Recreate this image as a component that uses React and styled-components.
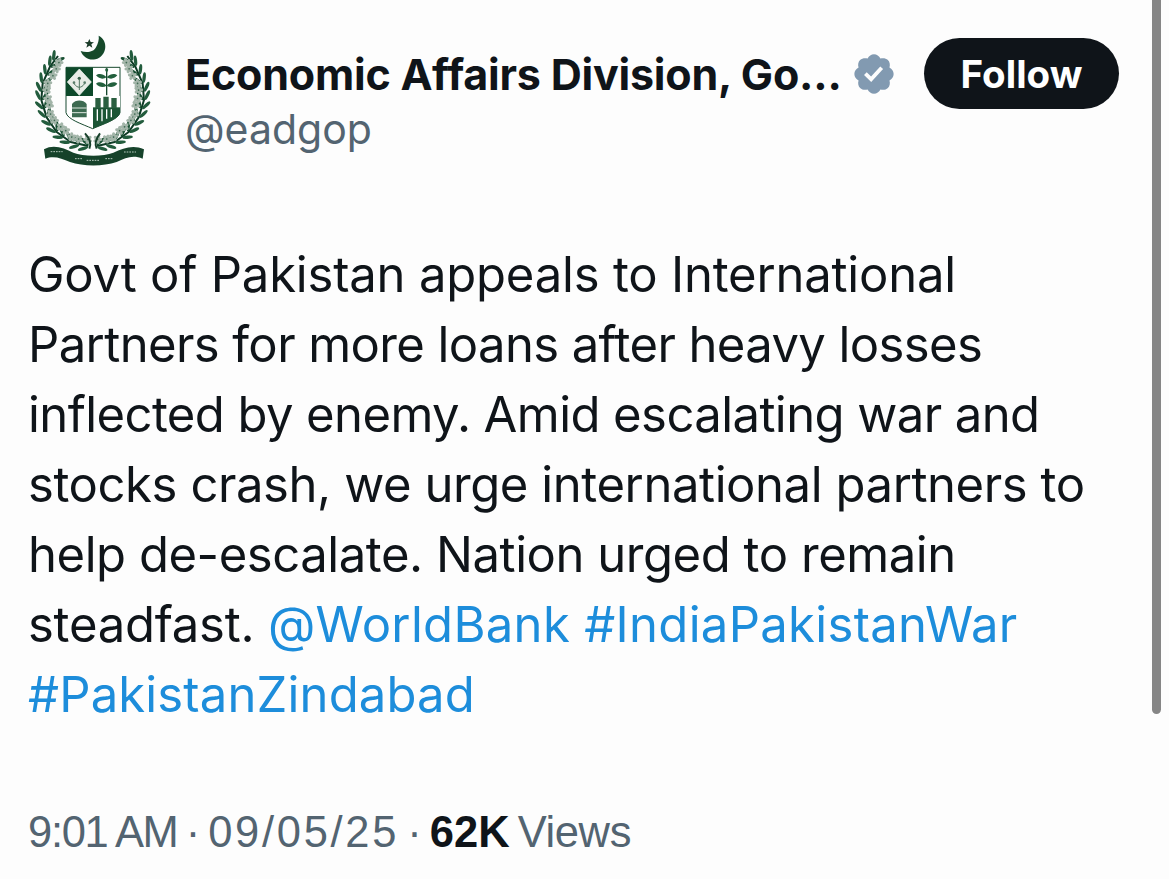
import React from "react";
import styled, { createGlobalStyle } from "styled-components";

const Global = createGlobalStyle`
  html, body { margin: 0; padding: 0; background: #fdfdfd; }
  * { box-sizing: border-box; }
`;

const Page = styled.div`
  position: relative;
  width: 1169px;
  height: 879px;
  overflow: hidden;
  background: #fdfdfd;
  font-family: Inter, "Liberation Sans", sans-serif;
  color: #0f1419;
`;

const Scrollbar = styled.div`
  position: absolute;
  top: 0;
  left: 1152px;
  width: 9px;
  height: 714px;
  background: #868686;
  border-radius: 0 0 5px 5px;
`;

const Header = styled.header`
  display: flex;
  align-items: flex-start;
  height: 160px;
  padding: 20px 0 0 20px;
`;

const Avatar = styled.svg`
  width: 150px;
  height: 160px;
  flex: none;
`;

const Identity = styled.div`
  display: flex;
  flex-direction: column;
  width: 739px;
  margin-left: 15px;
  padding-top: 25px;
`;

const NameRow = styled.div`
  display: flex;
  align-items: center;
  height: 58px;
`;

const Name = styled.span`
  font-size: 43px;
  font-weight: 700;
  letter-spacing: -0.2px;
  white-space: nowrap;
`;

const Badge = styled.svg`
  width: 46px;
  height: 46px;
  margin-left: 9px;
  fill: #829ab1;
  flex: none;
`;

const Handle = styled.span`
  font-size: 41px;
  line-height: 52px;
  color: #536471;
`;

const FollowButton = styled.button`
  width: 195px;
  height: 71px;
  margin-top: 18px;
  border: 0;
  border-radius: 36px;
  background: #0f1419;
  color: #fff;
  font: 700 38.5px Inter, "Liberation Sans", sans-serif;
`;

const Body = styled.div`
  padding: 80px 0 0 28px;
  font-size: 49px;
  line-height: 70px;
`;

const Line = styled.div`
  white-space: nowrap;
  letter-spacing: ${(p) => p.$track}px;
`;

const Link = styled.span`
  color: #1d8ddb;
  letter-spacing: ${(p) => p.$track}px;
`;

const Meta = styled.div`
  margin-top: 76px;
  padding-left: 28px;
  font-family: "Liberation Sans", sans-serif;
  font-size: 43.5px;
  line-height: 52px;
  word-spacing: -4px;
  color: #536471;
  white-space: nowrap;
`;

const Stamp = styled.span`
  letter-spacing: ${(p) => p.$track}px;
`;

const Count = styled.strong`
  color: #0f1419;
  font-weight: 700;
`;

const branch = [[205, 378], [152, 366], [110, 336], [80, 292], [64, 240], [68, 190], [90, 140], [114, 108]];

const samples = branch.slice(0, -1).flatMap(([x, y], i) => {
  const [nx, ny] = branch[i + 1];
  const angle = (Math.atan2(ny - y, nx - x) * 180) / Math.PI;
  return [0, 0.5].map((f, j) => ({
    key: `${i}-${j}`,
    x: x + (nx - x) * f,
    y: y + (ny - y) * f,
    angle,
    outer: (i + j) % 2 === 0,
  }));
});

const petals = [0, 72, 144, 216, 288];

function Wreath() {
  const stem = branch.map(([x, y], i) => `${i ? "L" : "M"}${x} ${y}`).join(" ");
  return (
    <g>
      <path d={stem} fill="none" stroke="#0f3a25" strokeWidth="6" strokeLinejoin="round" />
      {samples.map((p) => (
        <g key={p.key} transform={`translate(${p.x} ${p.y}) rotate(${p.angle})`}>
          <ellipse cx="14" cy="11" rx="16" ry="5" fill="#174f31" transform="rotate(30 14 11)" />
          <ellipse cx="14" cy="-11" rx="16" ry="5" fill="#235c3d" transform="rotate(-30 14 -11)" />
          <g transform={`translate(6 ${p.outer ? 19 : 14})`}>
            {petals.map((r) => (
              <ellipse key={r} cx="0" cy="-7" rx="5" ry="7" fill="#a3b5a9" transform={`rotate(${r})`} />
            ))}
            <circle r="2.5" fill="#3f6a53" />
          </g>
        </g>
      ))}
    </g>
  );
}

function Emblem() {
  return (
    <Avatar viewBox="0 0 450 480" aria-label="Emblem">
      <defs>
        <filter id="soft"><feGaussianBlur stdDeviation="1.1" /></filter>
      </defs>
      <g filter="url(#soft)">
        <path d="M236 47 C266 62 262 108 226 118 C206 122 190 112 182 93 C200 100 222 96 228 82 C234 70 238 58 236 47Z" fill="#14482c" />
        <path d="M208 57 l4 9 10 1 -8 6 3 10 -9 -6 -9 6 3 -10 -8 -6 10 -1Z" fill="#1e3d2c" />
        <Wreath />
        <g transform="matrix(-1 0 0 1 436 0)"><Wreath /></g>
        <path d="M138 142H300V278C296 298 250 312 218 326C186 312 142 298 138 278Z" fill="#fff" stroke="#1a4a30" strokeWidth="3" />
        <rect x="138" y="142" width="81" height="86" fill="#0f4a2a" />
        <path d="M178 147L214 186L178 226L142 186Z" fill="#e7ece6" stroke="#fff" strokeWidth="2" />
        <circle cx="178" cy="175" r="5" fill="#315c45" />
        <circle cx="162" cy="188" r="4" fill="#587c69" />
        <circle cx="194" cy="188" r="4" fill="#587c69" />
        <path d="M178 178V210M163 192C172 205 184 205 193 192" stroke="#4e7560" strokeWidth="3" fill="none" />
        <path d="M219 228H300V278C296 298 250 312 219 326Z" fill="#1a5534" />
        <rect x="219" y="228" width="81" height="34" fill="#fff" />
        <path d="M260 150V226" stroke="#164a2d" strokeWidth="4" />
        <path d="M260 172C248 160 236 160 228 166C238 178 250 178 260 172ZM260 172C272 160 284 160 292 166C282 178 270 178 260 172ZM260 197C248 185 236 185 228 191C238 203 250 203 260 197ZM260 197C272 185 284 185 292 191C282 203 270 203 260 197ZM260 158C254 150 254 148 260 143C266 148 266 150 260 158Z" fill="#24603e" />
        <path d="M226 234h16v30h-16zM250 230h16v34h-16zM274 234h16v30h-16z" fill="#2a5f40" />
        <path d="M230 268h4v34h-4zM244 268h4v36h-4zM258 268h4v28h-4zM272 268h4v24h-4z" fill="#fff" />
        <path d="M156 252C166 238 190 238 200 252V292H156Z" fill="#3c6a51" />
        <path d="M156 264H200M156 278H200" stroke="#dfe8e1" strokeWidth="3" />
        <path d="M195 340C210 356 215 370 208 386M240 340C228 356 222 370 230 386" stroke="#163f29" strokeWidth="6" fill="none" />
        <path d="M72 388C100 372 132 384 160 398C190 410 250 410 280 398C310 384 340 374 372 388L368 416C340 404 318 412 290 426C250 440 190 440 150 426C124 414 100 406 76 416Z" fill="#14432a" />
        <path d="M92 395h36M165 416h22M200 421h40M256 416h24M312 396h36" stroke="#b8c8bd" strokeWidth="3" strokeDasharray="5 3" />
      </g>
    </Avatar>
  );
}

export default function App() {
  return (
    <Page>
      <Global />
      <Scrollbar />
      <Header>
        <Emblem />
        <Identity>
          <NameRow>
            <Name>Economic Affairs Division, Go...</Name>
            <Badge viewBox="0 0 24 24">
              <path d="M22.25 12c0-1.43-.88-2.67-2.19-3.34.46-1.39.2-2.9-.81-3.91s-2.52-1.27-3.91-.81c-.66-1.31-1.91-2.19-3.34-2.19s-2.67.88-3.33 2.19c-1.4-.46-2.91-.2-3.92.81s-1.26 2.52-.8 3.91c-1.31.67-2.2 1.91-2.2 3.34s.89 2.67 2.2 3.34c-.46 1.39-.21 2.9.8 3.91s2.52 1.26 3.91.81c.67 1.31 1.91 2.19 3.34 2.19s2.68-.88 3.34-2.19c1.39.45 2.9.2 3.91-.81s1.27-2.52.81-3.91c1.31-.67 2.19-1.91 2.19-3.34zm-11.71 4.2L6.8 12.46l1.41-1.42 2.26 2.26 4.8-5.23 1.47 1.36-6.2 6.77z" />
            </Badge>
          </NameRow>
          <Handle>@eadgop</Handle>
        </Identity>
        <FollowButton>Follow</FollowButton>
      </Header>
      <Body>
        <Line $track={-0.2}>Govt of Pakistan appeals to International</Line>
        <Line $track={-0.6}>Partners for more loans after heavy losses</Line>
        <Line $track={-0.58}>inflected by enemy. Amid escalating war and</Line>
        <Line $track={-0.42}>stocks crash, we urge international partners to</Line>
        <Line $track={-0.45}>help de-escalate. Nation urged to remain</Line>
        <Line $track={-0.25}>steadfast. <Link $track={0.32}>@WorldBank #IndiaPakistanWar</Link></Line>
        <Line $track={0}><Link $track={0.15}>#PakistanZindabad</Link></Line>
      </Body>
      <Meta>
        <Stamp $track={-1.3}>9:01{"\u2009"}AM</Stamp> · <Stamp $track={2.7}>09/05/25</Stamp> · <Count>62K</Count> <Stamp $track={-0.4}>Views</Stamp>
      </Meta>
    </Page>
  );
}
